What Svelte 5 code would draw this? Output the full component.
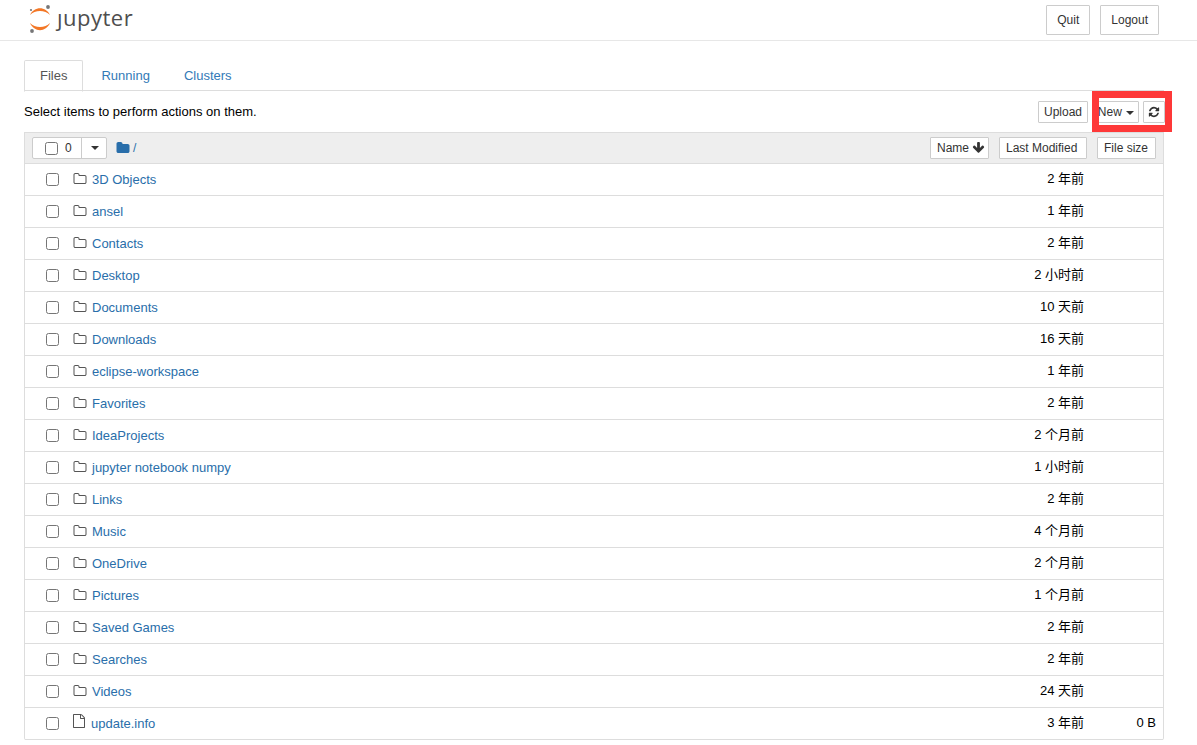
<script lang="ts">
  const folderO = "M1600 1312v-704q0-40-28-68t-68-28h-704q-40 0-68-28t-28-68v-64q0-40-28-68t-68-28h-320q-40 0-68 28t-28 68v960q0 40 28 68t68 28h1216q40 0 68-28t28-68zm128-704v704q0 92-66 158t-158 66h-1216q-92 0-158-66t-66-158v-960q0-92 66-158t158-66h320q92 0 158 66t66 158v32h672q92 0 158 66t66 158z";
  const fileO = "M1596 380q28 28 48 76t20 88v1152q0 40-28 68t-68 28h-1344q-40 0-68-28t-28-68v-1600q0-40 28-68t68-28h896q40 0 88 20t76 48zm-444-244v376h376q-10-29-22-41l-313-313q-12-12-41-22zm384 1528v-1024h-416q-40 0-68-28t-28-68v-416h-768v1536h1280z";

  const items = [
    { name: "3D Objects", modified: "2 年前" },
    { name: "ansel", modified: "1 年前" },
    { name: "Contacts", modified: "2 年前" },
    { name: "Desktop", modified: "2 小时前" },
    { name: "Documents", modified: "10 天前" },
    { name: "Downloads", modified: "16 天前" },
    { name: "eclipse-workspace", modified: "1 年前" },
    { name: "Favorites", modified: "2 年前" },
    { name: "IdeaProjects", modified: "2 个月前" },
    { name: "jupyter notebook numpy", modified: "1 小时前" },
    { name: "Links", modified: "2 年前" },
    { name: "Music", modified: "4 个月前" },
    { name: "OneDrive", modified: "2 个月前" },
    { name: "Pictures", modified: "1 个月前" },
    { name: "Saved Games", modified: "2 年前" },
    { name: "Searches", modified: "2 年前" },
    { name: "Videos", modified: "24 天前" },
    { name: "update.info", modified: "3 年前", size: "0 B", file: true }
  ];
</script>

<header class="site-header">
  <div class="logo">
    <svg class="logo-mark" viewBox="0 0 24 28" width="24" height="28" aria-hidden="true">
      <circle cx="20" cy="2" r="1.9" fill="#767677" />
      <circle cx="3" cy="5" r="1.1" fill="#767677" />
      <circle cx="4" cy="26" r="1.9" fill="#767677" />
      <path d="M2 10C6 1 18 1 22 10C17 4.700 7 4.700 2 10Z" fill="#f37726" />
      <path d="M2 18C6 27.500 18 27.500 22 18C17 23.300 7 23.300 2 18Z" fill="#f37726" />
    </svg>
    <span class="logo-text" aria-label="jupyter">ȷupyter</span>
  </div>
  <div class="header-actions">
    <button class="btn tall">Quit</button>
    <button class="btn tall">Logout</button>
  </div>
</header>

<main class="page">
  <nav class="tabs">
    <span class="tab active">Files</span>
    <span class="tab">Running</span>
    <span class="tab">Clusters</span>
  </nav>

  <div class="toolbar">
    <span>Select items to perform actions on them.</span>
    <div class="toolbar-actions">
      <button class="btn small upload">Upload</button>
      <button class="btn small new">New <i class="caret"></i></button>
      <button class="btn small refresh" aria-label="Refresh">
        <svg viewBox="0 0 1792 1792" width="12" height="12" aria-hidden="true">
          <path fill="#333" d="M1639 1056q0 5-1 7-64 268-268 434.5t-478 166.5q-146 0-282.500-55t-243.500-157l-129 129q-19 19-45 19t-45-19-19-45v-448q0-26 19-45t45-19h448q26 0 45 19t19 45-19 45l-137 137q71 66 161 102t187 36q134 0 250-65t186-179q11-17 53-117 8-23 30-23h192q13 0 22.500 9.500t9.500 22.500zm25-800v448q0 26-19 45t-45 19h-448q-26 0-45-19t-19-45 19-45l138-138q-148-137-349-137-134 0-250 65t-186 179q-11 17-53 117-8 23-30 23h-199q-13 0-22.500-9.500t-9.500-22.500v-7q65-268 270-434.500t480-166.500q146 0 284 55.500t245 156.500l130-129q19-19 45-19t45 19 19 45z" />
        </svg>
      </button>
    </div>
    <div class="highlight"></div>
  </div>

  <section class="list">
    <div class="list-header">
      <div class="select-group">
        <label class="select-count"><input type="checkbox" /> <span>0</span></label>
        <span class="select-menu"><i class="caret"></i></span>
      </div>
      <svg class="root-folder" viewBox="0 0 1792 1792" width="14" height="14" aria-hidden="true">
        <path fill="#296eaa" d="M1728 608v704q0 92-66 158t-158 66h-1216q-92 0-158-66t-66-158v-960q0-92 66-158t158-66h320q92 0 158 66t66 158v32h672q92 0 158 66t66 158z" />
      </svg>
      <span class="root-path">/</span>
      <div class="sorters">
        <button class="btn tiny name-sort">Name
          <svg viewBox="0 0 1792 1792" width="13" height="13" aria-hidden="true">
            <path fill="#333" d="M1675 832q0 53-37 90l-651 652q-39 37-91 37-53 0-90-37l-651-652q-38-36-38-90 0-53 38-91l74-75q39-37 91-37 53 0 90 37l294 294v-704q0-52 38-90t90-38h128q52 0 90 38t38 90v704l294-294q37-37 90-37 52 0 91 37l75 75q37 39 37 91z" />
          </svg>
        </button>
        <button class="btn tiny modified-sort">Last Modified</button>
        <button class="btn tiny size-sort">File size</button>
      </div>
    </div>

    {#each items as item}
      <div class="row">
        <input type="checkbox" />
        <svg class="item-icon" class:file={item.file} viewBox="0 0 1792 1792" width="14" height="14" aria-hidden="true">
          <path fill="#555" d={item.file ? fileO : folderO} />
        </svg>
        <a class="item-name" class:file={item.file} href="#top">{item.name}</a>
        <span class="item-modified">{item.modified}</span>
        <span class="item-size">{item.size ?? ""}</span>
      </div>
    {/each}
  </section>
</main>

<style>
  :global(body) {
    margin: 0;
    background: #fff;
    color: #000;
    font-family: "Liberation Sans", "Noto Sans CJK SC", sans-serif;
    font-size: 13px;
    line-height: 18px;
    overflow: hidden;
  }

  .site-header {
    display: flex;
    justify-content: space-between;
    height: 40px;
    padding: 0 38px 0 28px;
    border-bottom: 1px solid #e7e7e7;
  }

  .logo {
    display: flex;
    align-items: flex-start;
    gap: 5px;
    padding-top: 5px;
  }

  .logo-text {
    margin-top: -3px;
    color: #4e4e4e;
    font-family: "Open Sans", sans-serif;
    font-size: 22px;
    line-height: 30px;
    letter-spacing: 0.5px;
  }

  .header-actions {
    display: flex;
    gap: 10px;
    padding-top: 5px;
  }

  .btn {
    margin: 0;
    padding: 0;
    background: #fff;
    border: 1px solid #ccc;
    border-radius: 1px;
    color: #333;
    font: inherit;
    font-size: 12px;
  }

  .tall {
    height: 30px;
    padding: 0 10px;
  }

  .page {
    padding: 19px 33px 0 24px;
  }

  .tabs {
    display: flex;
    height: 30px;
    border-bottom: 1px solid #ddd;
  }

  .tab {
    height: 30px;
    padding: 0 16px;
    border: 1px solid transparent;
    color: #337ab7;
    line-height: 30px;
    box-sizing: content-box;
  }

  .tab.active {
    margin-right: 1px;
    padding: 0 15px;
    border-color: #ddd;
    border-bottom-color: #fff;
    border-radius: 2px 2px 0 0;
    color: #555;
  }

  .toolbar {
    position: relative;
    display: flex;
    justify-content: space-between;
    align-items: center;
    height: 41px;
    padding-top: 1px;
    box-sizing: border-box;
  }

  .toolbar-actions {
    display: flex;
    margin-right: -1px;
    gap: 4px;
  }

  .small {
    height: 22px;
    line-height: 20px;
  }

  .upload {
    width: 50px;
    margin-right: 1px;
  }

  .new {
    width: 46px;
  }

  .refresh {
    display: flex;
    align-items: center;
    justify-content: center;
    width: 22px;
  }

  .caret {
    display: inline-block;
    width: 0;
    height: 0;
    margin-left: 1px;
    vertical-align: middle;
    border-top: 4px solid #333;
    border-left: 4px solid transparent;
    border-right: 4px solid transparent;
  }

  .highlight {
    position: absolute;
    left: 1068px;
    top: 0;
    width: 66px;
    height: 27px;
    border: 7px solid #fe3838;
    pointer-events: none;
  }

  .list {
    border-left: 1px solid #ddd;
    border-right: 1px solid #ddd;
    border-radius: 0 0 2px 2px;
  }

  .list-header {
    display: flex;
    align-items: center;
    height: 32px;
    padding: 0 7px;
    background: #eee;
    border-top: 1px solid #ddd;
    border-bottom: 1px solid #ddd;
    box-sizing: border-box;
  }

  .select-group {
    display: flex;
    height: 22px;
    background: #fff;
    border: 1px solid #ccc;
    border-radius: 2px;
    box-sizing: border-box;
    color: #333;
    font-size: 12px;
  }

  .select-count {
    display: flex;
    align-items: center;
    gap: 7px;
    width: 49px;
    padding-left: 12px;
    box-sizing: border-box;
    border-right: 1px solid #ccc;
  }

  .select-count input {
    margin: 0;
  }

  .select-menu {
    display: flex;
    align-items: center;
    justify-content: center;
    width: 24px;
  }

  .root-folder {
    margin-left: 9px;
  }

  .root-path {
    margin-left: 3px;
    color: #296eaa;
    font-size: 12px;
  }

  .sorters {
    display: flex;
    margin-left: auto;
  }

  .tiny {
    height: 22px;
    padding-left: 6px;
    line-height: 20px;
    text-align: left;
  }

  .name-sort {
    width: 59px;
    margin-right: 10px;
  }

  .name-sort svg {
    vertical-align: -2px;
  }

  .modified-sort {
    width: 88px;
    margin-right: 10px;
  }

  .size-sort {
    width: 59px;
  }

  .row {
    display: flex;
    align-items: center;
    height: 32px;
    padding: 0 7px 0 21px;
    border-bottom: 1px solid #ddd;
    box-sizing: border-box;
  }

  .row input {
    flex: none;
    width: 13px;
    height: 13px;
    margin: 0;
  }

  .item-icon {
    flex: none;
    margin: -2px 0 0 13.5px;
  }

  .item-icon.file {
    margin: -5px 0 0 13px;
  }

  .item-name {
    margin-left: 5.5px;
    color: #296eaa;
    text-decoration: none;
    padding-top: 1px;
  }

  .item-name.file {
    margin-left: 5px;
  }

  .item-modified {
    margin-left: auto;
    margin-top: -1px;
  }

  .item-size {
    width: 72px;
    margin-top: -1px;
    text-align: right;
  }
</style>
